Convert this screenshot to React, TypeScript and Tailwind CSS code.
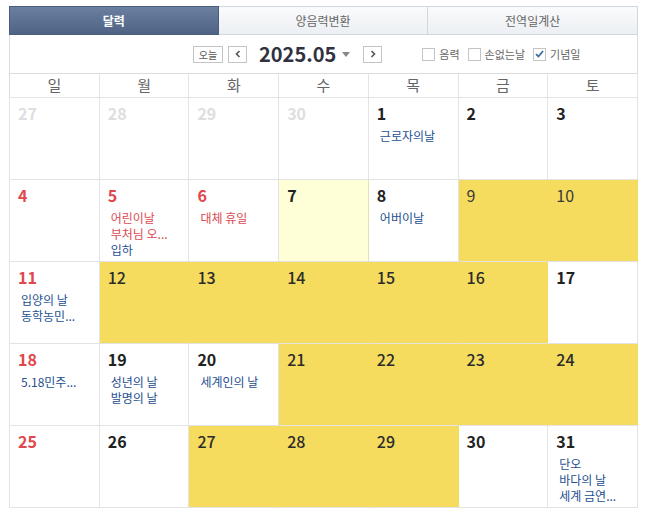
import React from "react";

type Ev = { t: string; red?: boolean };
type Day = {
  d: number;
  prev?: boolean;
  red?: boolean;
  today?: boolean;
  hl?: boolean;
  thin?: boolean;
  ev?: Ev[];
};

const weeks: Day[][] = [
  [
    { d: 27, prev: true },
    { d: 28, prev: true },
    { d: 29, prev: true },
    { d: 30, prev: true },
    { d: 1, ev: [{ t: "근로자의날" }] },
    { d: 2 },
    { d: 3 },
  ],
  [
    { d: 4, red: true },
    {
      d: 5,
      red: true,
      ev: [{ t: "어린이날", red: true }, { t: "부처님 오...", red: true }, { t: "입하" }],
    },
    { d: 6, red: true, ev: [{ t: "대체 휴일", red: true }] },
    { d: 7, today: true },
    { d: 8, ev: [{ t: "어버이날" }] },
    { d: 9, hl: true, thin: true },
    { d: 10, hl: true, thin: true },
  ],
  [
    { d: 11, red: true, ev: [{ t: "입양의 날" }, { t: "동학농민..." }] },
    { d: 12, hl: true },
    { d: 13, hl: true },
    { d: 14, hl: true },
    { d: 15, hl: true },
    { d: 16, hl: true },
    { d: 17 },
  ],
  [
    { d: 18, red: true, ev: [{ t: "5.18민주..." }] },
    { d: 19, ev: [{ t: "성년의 날" }, { t: "발명의 날" }] },
    { d: 20, ev: [{ t: "세계인의 날" }] },
    { d: 21, hl: true },
    { d: 22, hl: true },
    { d: 23, hl: true },
    { d: 24, hl: true },
  ],
  [
    { d: 25, red: true },
    { d: 26 },
    { d: 27, hl: true },
    { d: 28, hl: true },
    { d: 29, hl: true },
    { d: 30 },
    { d: 31, ev: [{ t: "단오" }, { t: "바다의 날" }, { t: "세계 금연..." }] },
  ],
];

const dayNames = ["일", "월", "화", "수", "목", "금", "토"];

const Check = ({ on }: { on?: boolean }) => (
  <span className="w-[13px] h-[13px] border border-[#c4c4c4] bg-white flex items-center justify-center">
    {on && (
      <svg width="9" height="8" viewBox="0 0 9 8">
        <path d="M1 4.2 L3.4 6.5 L8 1.2" fill="none" stroke="#3f6fa6" strokeWidth="1.8" />
      </svg>
    )}
  </span>
);

const Cell = ({ day }: { day: Day }) => {
  let bg = "bg-white border-r-[#e3e3e3]";
  if (day.hl) bg = "bg-[#f5dc5f] border-r-[#f5dc5f]";
  if (day.today) bg = "bg-[#ffffd7] border-r-[#e6e2b4]";
  let num = "text-[#222] font-bold";
  if (day.prev) num = "text-[#dedede] font-bold";
  else if (day.red) num = "text-[#e0474c] font-bold";
  else if (day.hl) num = day.thin ? "text-[#3a3a3a] font-normal" : "text-[#2b2b2b] font-medium";
  return (
    <div className={`h-[82px] border-r border-b border-b-[#e3e3e3] pl-[8px] pt-[5px] ${bg}`}>
      <div className={`text-[16px] leading-[20px] ${num}`}>{day.d}</div>
      {day.ev && (
        <div className="mt-[5px] pl-[3px]">
          {day.ev.map((e, i) => (
            <div
              key={i}
              className={`text-[12px] leading-[16px] whitespace-nowrap ${
                e.red ? "text-[#dc4a4f]" : "text-[#24508f]"
              }`}
            >
              {e.t}
            </div>
          ))}
        </div>
      )}
    </div>
  );
};

export default function App() {
  return (
    <div
      className="w-[650px] h-[519px] bg-white pt-[6px] pl-[9px]"
      style={{ fontFamily: '"Noto Sans CJK KR", "Noto Sans", sans-serif' }}
    >
      <div className="w-[629px]">
        {/* Tabs */}
        <div className="grid grid-cols-3 h-[29px] text-[12px]">
          <div className="flex items-center justify-center text-white font-bold bg-gradient-to-b from-[#6b80a0] to-[#4f6385] border border-[#4a5d7c]">
            달력
          </div>
          <div className="flex items-center justify-center text-[#666] bg-gradient-to-b from-[#fafbfc] to-[#eceff3] border-y border-r border-[#d2d7de]">
            양음력변환
          </div>
          <div className="flex items-center justify-center text-[#666] bg-gradient-to-b from-[#fafbfc] to-[#eceff3] border-y border-r border-[#d2d7de]">
            전역일계산
          </div>
        </div>

        {/* Month navigation */}
        <div className="h-[39px] border-x border-b border-[#dcdcdc] flex items-center pl-[183px]">
          <button className="w-[30px] h-[17px] border border-[#c4c4c4] bg-white text-[10px] leading-[15px] text-[#555]">
            오늘
          </button>
          <button className="ml-[5px] w-[19px] h-[17px] border border-[#c4c4c4] bg-white flex items-center justify-center">
            <svg width="6" height="8" viewBox="0 0 6 8">
              <path d="M4.5 1 L1.5 4 L4.5 7" fill="none" stroke="#555" strokeWidth="1.6" />
            </svg>
          </button>
          <span className="ml-[12px] text-[20px] leading-[24px] font-bold text-[#30323f]">2025.05</span>
          <svg className="ml-[6px]" width="8" height="5" viewBox="0 0 8 5">
            <path d="M0 0 L8 0 L4 5 Z" fill="#888" />
          </svg>
          <button className="ml-[13px] w-[19px] h-[17px] border border-[#c4c4c4] bg-white flex items-center justify-center">
            <svg width="6" height="8" viewBox="0 0 6 8">
              <path d="M1.5 1 L4.5 4 L1.5 7" fill="none" stroke="#555" strokeWidth="1.6" />
            </svg>
          </button>
          <div className="ml-[40px] flex items-center text-[11px] text-[#666]">
            <Check />
            <span className="ml-[4px]">음력</span>
            <span className="ml-[8px]">
              <Check />
            </span>
            <span className="ml-[4px]">손없는날</span>
            <span className="ml-[8px]">
              <Check on />
            </span>
            <span className="ml-[4px]">기념일</span>
          </div>
        </div>

        {/* Day names */}
        <div className="grid grid-cols-7 border-l border-[#dcdcdc]">
          {dayNames.map((n) => (
            <div
              key={n}
              className="h-[24px] border-r border-b border-[#e3e3e3] flex items-center justify-center text-[15px] text-[#666]"
            >
              {n}
            </div>
          ))}
        </div>

        {/* Weeks */}
        <div className="border-l border-[#e3e3e3]">
          {weeks.map((w, i) => (
            <div key={i} className="grid grid-cols-7">
              {w.map((day, j) => (
                <Cell key={j} day={day} />
              ))}
            </div>
          ))}
        </div>
      </div>
    </div>
  );
}
